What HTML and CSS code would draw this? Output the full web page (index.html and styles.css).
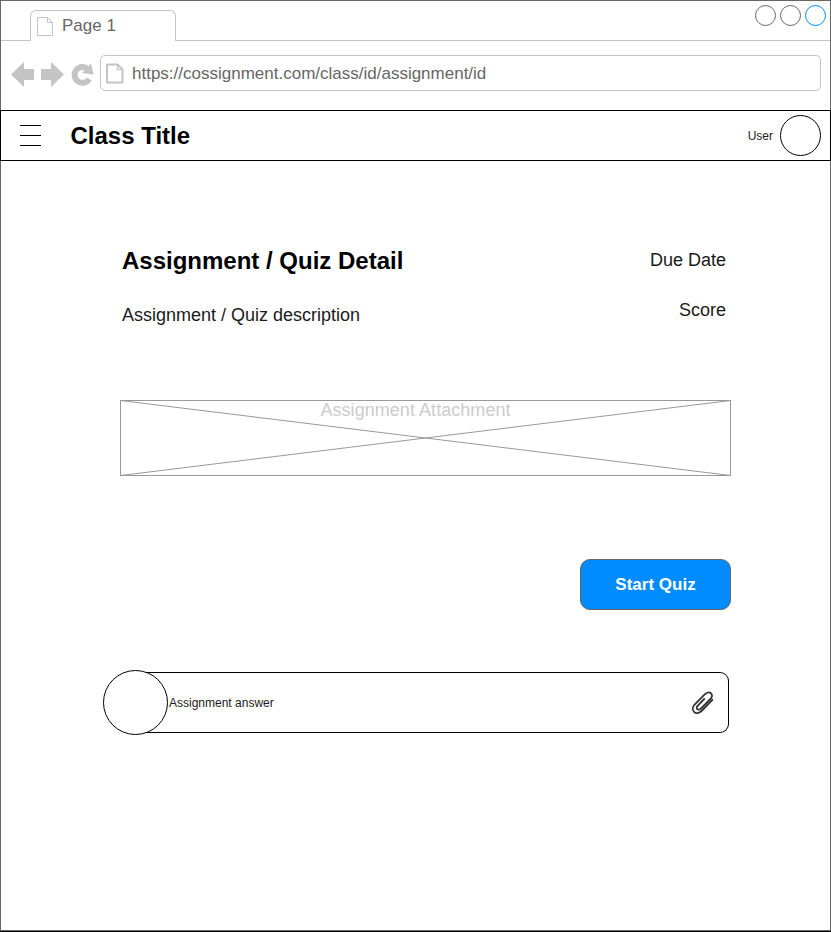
FILE: index.html
```html
<!DOCTYPE html>
<html lang="en">
<head>
<meta charset="utf-8">
<title>Assignment / Quiz Detail</title>
<link rel="stylesheet" href="styles.css">
</head>
<body>
<div class="window">
  <div class="tabs">
    <div class="tabs-lead"></div>
    <div class="tab">
      <svg width="18" height="21" viewBox="0 0 18 21" fill="none" stroke="#c4c4c4"><path d="M1.5 1.5H11.5L16.5 6.5V19.5H1.5ZM11.5 1.5V6.5H16.5"/></svg>
      <span>Page 1</span>
    </div>
    <div class="controls">
      <span class="control"></span><span class="control"></span><span class="control active"></span>
    </div>
  </div>
  <div class="toolbar">
    <svg class="nav" width="84" height="30" viewBox="10 60 84 30" fill="#c4c4c4">
      <path d="M11 74.5L24 62V69H34V80H24V87Z"/>
      <path d="M64 74.5L51 62V69H41V80H51V87Z"/>
      <path d="M88 69.2A7.9 7.9 0 1 0 89.3 79" fill="none" stroke="#c4c4c4" stroke-width="6"/>
      <path d="M91 63.5L93.7 74.5L82 73Z"/>
    </svg>
    <div class="address">
      <svg width="20" height="22" viewBox="0 0 20 22" fill="none" stroke="#c4c4c4" stroke-width="2"><path d="M2 2.5H12.5L17.5 7.5V20.5H2Z"/><path d="M12.5 2.5V7.5H17.5" stroke-width="1.2"/></svg>
      <span>https://cossignment.com/class/id/assignment/id</span>
    </div>
  </div>
  <header class="header">
    <div class="menu"><i></i><i></i><i></i></div>
    <h1>Class Title</h1>
    <span class="user">User</span>
    <span class="avatar"></span>
  </header>
  <main>
    <section class="detail">
      <div class="info">
        <h2>Assignment / Quiz Detail</h2>
        <p>Assignment / Quiz description</p>
      </div>
      <div class="meta">
        <span>Due Date</span>
        <span>Score</span>
      </div>
    </section>
    <div class="attachment">
      <svg class="cross" width="611" height="76" viewBox="0 0 611 76" fill="none" stroke="#999"><path d="M.5 .5H610.5V75.5H.5ZM.5 .5L610.5 75.5M610.5 .5L.5 75.5"/></svg>
      <span>Assignment Attachment</span>
    </div>
    <button class="start">Start Quiz</button>
    <div class="answer">
      <span class="author"></span>
      <span class="answer-text">Assignment answer</span>
      <svg class="clip" width="24" height="26" viewBox="690 689 24 26" fill="none" stroke="#333" stroke-width="1.8" stroke-linecap="round" stroke-linejoin="round"><path d="M712.4 698.8L701.5 710C699 712.5 695.8 712.7 694 710.8C692.2 709 692.4 706 694.6 703.7L704.7 693.4C706.8 691.3 709.5 690.9 711.1 692.4C712.7 694 712.1 696.3 710.4 698L700.8 707.6C699.7 708.7 698.1 709 697.2 708.1C696.3 707.2 696.7 705.7 697.8 704.6L704.2 698"/></svg>
    </div>
  </main>
</div>
</body>
</html>
```
FILE: styles.css
```css
* { box-sizing: border-box; }
body {
  margin: 0;
  height: 932px;
  overflow: hidden;
  background: #fff;
  border-bottom: 1px solid #000;
  font-family: "Liberation Sans", Arial, sans-serif;
  color: #1a1a1a;
}
h1, h2, p { margin: 0; }
svg { display: block; flex: none; }
.window { width: 831px; height: 931px; border: 1px solid #666; }

.tabs { display: flex; height: 40px; }
.tabs-lead { width: 29px; border-bottom: 1px solid #c4c4c4; }
.tab {
  width: 146px;
  height: 31px;
  margin-top: 9px;
  padding: 5px 0 0 5px;
  display: flex;
  gap: 8px;
  border: 1px solid #c4c4c4;
  border-bottom: 0;
  border-radius: 6px 6px 0 0;
  color: #666;
  font-size: 17px;
  line-height: 20px;
}
.controls {
  flex: 1;
  display: flex;
  justify-content: flex-end;
  gap: 4px;
  padding: 4px 4px 0 0;
  border-bottom: 1px solid #c4c4c4;
}
.control { width: 21px; height: 21px; border: 1px solid #666; border-radius: 50%; }
.control.active { border-color: #008cff; }

.toolbar { display: flex; height: 69px; padding: 14px 9px 0; }
.nav { margin-top: 5px; }
.address {
  flex: 1;
  height: 36px;
  margin-left: 6px;
  padding-left: 4px;
  display: flex;
  align-items: center;
  gap: 7px;
  border: 1px solid #c4c4c4;
  border-radius: 5px;
  color: #666;
  font-size: 17px;
}
.address span { padding-top: 2px; }

.header {
  height: 51px;
  margin: 0 -1px;
  padding: 0 9px 0 19px;
  display: flex;
  align-items: center;
  border: 1px solid #000;
}
.menu { width: 21px; display: grid; gap: 9px; }
.menu i { height: 1px; background: #000; }
.header h1 { margin-left: 29.5px; font-size: 24px; line-height: 28px; color: #000; }
.user { margin-left: auto; font-size: 12px; }
.avatar { width: 41px; height: 41px; margin-left: 7px; border: 1px solid #000; border-radius: 50%; }

main { display: flex; flex-direction: column; width: 611px; margin: 86px 0 0 119px; }
.detail { display: flex; justify-content: space-between; height: 153px; padding: 0 5px 0 2px; }
.info h2 { font-size: 24px; line-height: 28px; color: #000; }
.info p { margin-top: 30px; font-size: 18px; line-height: 20px; }
.meta { display: flex; flex-direction: column; align-items: flex-end; gap: 30px; padding-top: 3px; font-size: 18px; line-height: 20px; }
.attachment {
  position: relative;
  height: 76px;
  padding-right: 20px;
  text-align: center;
  font-size: 18px;
  letter-spacing: 0.05px;
  line-height: 20px;
  color: #ccc;
}
.cross { position: absolute; inset: 0; }
.attachment span { position: relative; }
.start {
  align-self: flex-end;
  width: 151px;
  height: 51px;
  margin-top: 83px;
  padding: 0;
  border: 1px solid #666;
  border-radius: 10px;
  background: #008cff;
  color: #fff;
  font: bold 17px "Liberation Sans", Arial, sans-serif;
}
.answer {
  width: 608.5px;
  height: 61px;
  margin-top: 62px;
  display: flex;
  align-items: center;
  border: 1px solid #000;
  border-left: 0;
  border-radius: 9px;
  font-size: 12px;
}
.author {
  width: 65px;
  height: 65px;
  margin: -3px 0 -3px -17.5px;
  flex: none;
  border: 1px solid #000;
  border-radius: 50%;
  background: #fff;
}
.answer-text { margin-left: 1.5px; }
.clip { margin: 0 13.5px 0 auto; }
```
